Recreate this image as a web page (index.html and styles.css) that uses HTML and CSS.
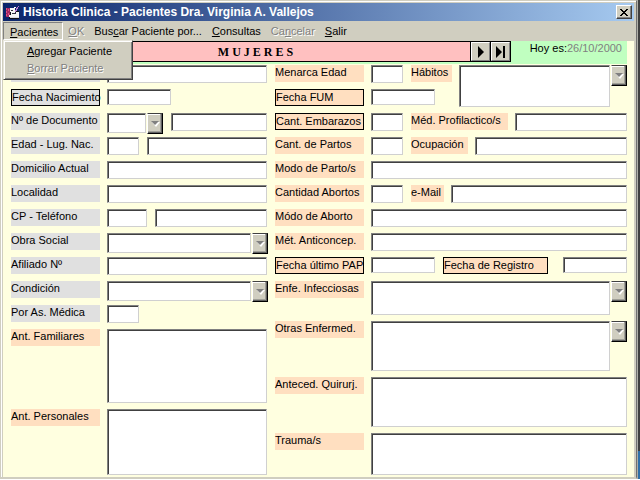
FILE: index.html
```html
<!DOCTYPE html>
<html lang="es">
<head>
<meta charset="utf-8">
<title>Historia Clinica</title>
<link rel="stylesheet" href="styles.css">
</head>
<body>
<div class="screen">
<main class="window">
  <header class="titlebar">
    <svg class="app-icon" viewBox="0 0 16 16" width="16" height="16" shape-rendering="crispEdges" aria-hidden="true">
      <path fill="#a02860" d="M1 4h4v9H1z"/><path fill="#e05080" d="M1 4h1v2H1zM3 5h1v2H3zM1 7h1v2H1zM3 9h1v2H3zM1 10h1v2H1z"/>
      <path fill="#101018" d="M5 7h9v7H5zM4 13h10v2H4z"/>
      <path fill="#f4f4f4" d="M5 4h5v2h1v2h3v5H4v-2h2V8H5z"/><path fill="#d8d8e0" d="M5 13h9v1H5z"/>
      <path fill="#303040" d="M6 6h2v1H6zM7 9h4v1H7zM10 8h1v1h-1z"/>
      <path fill="#c080d0" d="M13 2h1v1h-1v2h-1v2h-1v1h-1V6h1V4h1V3h1z"/><path fill="#fff" d="M9 3h2v1H9z"/>
    </svg>
    <h1>Historia Clinica - Pacientes Dra. Virginia A. Vallejos</h1>
    <button class="close" type="button" aria-label="Cerrar"><svg viewBox="0 0 8 7" width="8" height="7" shape-rendering="crispEdges" aria-hidden="true"><path d="M0 0h2v1h1v1h2V1h1V0h2v1H7v1H6v1H5v1h1v1h1v1h1v1H6V6H5V5H3v1H2v1H0V6h1V5h1V4h1V3H2V2H1V1H0z"/></svg></button>
  </header>

  <nav class="menubar">
    <button class="menu open" type="button"><u>P</u>acientes</button>
    <button class="menu" type="button" disabled><u>O</u>K</button>
    <button class="menu" type="button">Bus<u>c</u>ar Paciente por...</button>
    <button class="menu" type="button"><u>C</u>onsultas</button>
    <button class="menu" type="button" disabled>Ca<u>n</u>celar</button>
    <button class="menu" type="button"><u>S</u>alir</button>
    <div class="dropdown">
      <button type="button"><u>A</u>gregar Paciente</button>
      <button type="button" disabled><u>B</u>orrar Paciente</button>
    </div>
  </nav>

  <div class="client">
    <div class="record">
      <div class="navigator">
        <h2>M U J E R E S</h2>
        <button type="button" aria-label="Siguiente"><svg viewBox="0 0 10 12" width="10" height="12" aria-hidden="true"><path d="M2 0l6 6-6 6z"/></svg></button>
        <button type="button" aria-label="Último"><svg viewBox="0 0 10 12" width="10" height="12" aria-hidden="true"><path d="M0 0l6 6-6 6zM7 0h2v12H7z"/></svg></button>
      </div>
      <p class="today">Hoy es:<span>26/10/2000</span></p>
    </div>

    <form class="form">
      <section class="column">
        <div class="row"><span class="label gray"></span><input class="grow" type="text" aria-label="Paciente"></div>
        <div class="row"><label class="label gray boxed" for="nac">Fecha Nacimiento</label><input class="date" id="nac" type="text"></div>
        <div class="row"><label class="label gray" for="doc">Nº de Documento</label><span class="combo small"><select id="doc"></select><span class="arrow"><svg viewBox="0 0 9 6" width="9" height="6" aria-hidden="true"><path class="light" d="M1 1h8L5 6z"/><path class="dark" d="M0 0h8L4 4z"/></svg></span></span><input class="grow" type="text" aria-label="Número"></div>
        <div class="row"><label class="label gray" for="edad">Edad - Lug. Nac.</label><input class="short" id="edad" type="text"><input class="grow" type="text" aria-label="Lugar"></div>
        <div class="row"><label class="label gray" for="dom">Domicilio Actual</label><input class="grow" id="dom" type="text"></div>
        <div class="row"><label class="label gray" for="loc">Localidad</label><input class="grow" id="loc" type="text"></div>
        <div class="row"><label class="label gray" for="cp">CP - Teléfono</label><input class="code" id="cp" type="text"><input class="grow" type="text" aria-label="Teléfono"></div>
        <div class="row"><label class="label gray" for="obra">Obra Social</label><span class="combo"><select id="obra"></select><span class="arrow"><svg viewBox="0 0 9 6" width="9" height="6" aria-hidden="true"><path class="light" d="M1 1h8L5 6z"/><path class="dark" d="M0 0h8L4 4z"/></svg></span></span></div>
        <div class="row"><label class="label gray" for="afi">Afiliado Nº</label><input class="grow" id="afi" type="text"></div>
        <div class="row"><label class="label gray" for="cond">Condición</label><span class="combo"><select id="cond"></select><span class="arrow"><svg viewBox="0 0 9 6" width="9" height="6" aria-hidden="true"><path class="light" d="M1 1h8L5 6z"/><path class="dark" d="M0 0h8L4 4z"/></svg></span></span></div>
        <div class="row"><label class="label gray" for="as">Por As. Médica</label><input class="short" id="as" type="text"></div>
        <div class="row area"><label class="label" for="fam">Ant. Familiares</label><textarea class="h-large" id="fam"></textarea></div>
        <div class="row area"><label class="label" for="per">Ant. Personales</label><textarea class="h-medium" id="per"></textarea></div>
      </section>

      <section class="column">
        <div class="top">
          <label class="label" for="men">Menarca Edad</label><input class="short" id="men" type="text">
          <label class="label habits-label" for="hab">Hábitos</label>
          <div class="habits"><textarea id="hab"></textarea><button class="arrow" type="button" aria-label="Elegir hábitos"><svg viewBox="0 0 9 6" width="9" height="6" aria-hidden="true"><path class="light" d="M1 1h8L5 6z"/><path class="dark" d="M0 0h8L4 4z"/></svg></button></div>
          <label class="label boxed" for="fum">Fecha FUM</label><input class="date fum" id="fum" type="text">
        </div>
        <div class="row"><label class="label boxed" for="emb">Cant. Embarazos</label><input class="short" id="emb" type="text"><label class="label w-long" for="prof">Méd. Profilactico/s</label><input class="grow" id="prof" type="text"></div>
        <div class="row"><label class="label" for="partos">Cant. de Partos</label><input class="short" id="partos" type="text"><label class="label w-mid" for="ocu">Ocupación</label><input class="grow" id="ocu" type="text"></div>
        <div class="row"><label class="label" for="modo">Modo de Parto/s</label><input class="grow" id="modo" type="text"></div>
        <div class="row"><label class="label" for="abo">Cantidad Abortos</label><input class="short" id="abo" type="text"><label class="label w-mail" for="mail">e-Mail</label><input class="grow" id="mail" type="text"></div>
        <div class="row"><label class="label" for="mabo">Módo de Aborto</label><input class="grow" id="mabo" type="text"></div>
        <div class="row"><label class="label" for="anti">Mét. Anticoncep.</label><input class="grow" id="anti" type="text"></div>
        <div class="row"><label class="label boxed" for="pap">Fecha último PAP</label><input class="date" id="pap" type="text"><label class="label boxed w-reg" for="reg">Fecha de Registro</label><input class="date end" id="reg" type="text"></div>
        <div class="row area"><label class="label" for="inf">Enfe. Infecciosas</label><textarea class="h-small" id="inf"></textarea><button class="arrow" type="button" aria-label="Elegir infecciosas"><svg viewBox="0 0 9 6" width="9" height="6" aria-hidden="true"><path class="light" d="M1 1h8L5 6z"/><path class="dark" d="M0 0h8L4 4z"/></svg></button></div>
        <div class="row area"><label class="label" for="otras">Otras Enfermed.</label><textarea class="h-mid" id="otras"></textarea><button class="arrow" type="button" aria-label="Elegir otras"><svg viewBox="0 0 9 6" width="9" height="6" aria-hidden="true"><path class="light" d="M1 1h8L5 6z"/><path class="dark" d="M0 0h8L4 4z"/></svg></button></div>
        <div class="row area"><label class="label" for="qui">Anteced. Quirurj.</label><textarea class="h-mid" id="qui"></textarea></div>
        <div class="row area"><label class="label" for="tra">Trauma/s</label><textarea class="h-low" id="tra"></textarea></div>
      </section>
    </form>
  </div>
</main>
<div class="behind" aria-hidden="true"></div>
</div>
</body>
</html>
```
FILE: styles.css
```css
* { box-sizing: border-box; }

body {
  margin: 0;
  background: #fff;
  color: #000;
  font: 11px/14px "Liberation Sans", Arial, sans-serif;
}

h1, h2, p { margin: 0; }
button, input, select, textarea { font: inherit; color: inherit; border-radius: 0; margin: 0; }
button { padding: 0; }

.screen { display: flex; }

.window {
  flex: 1;
  min-width: 0;
  border: 1px solid #d0cec0;
  border-right-color: #707070;
  border-bottom: 2px solid #d0cec0;
  box-shadow: inset 1px 1px #fff;
  background: #d0cec0;
  padding: 2px 2px 0;
}

.behind {
  width: 3px;
  border-left: 1px solid #b0b0a8;
  background: linear-gradient(#404040 451px, #3070a8 451px);
}

/* Title bar */
.titlebar {
  display: flex;
  align-items: center;
  height: 18px;
  padding: 0 2px;
  background: linear-gradient(90deg, #0a246a, #a6caf0);
  color: #fff;
}
.titlebar h1 { flex: 1; margin-left: 2px; font-size: 12px; line-height: 18px; white-space: nowrap; }
.close {
  display: flex;
  align-items: center;
  justify-content: center;
  width: 16px;
  height: 14px;
  border: 1px solid;
  border-color: #fff #404040 #404040 #fff;
  box-shadow: inset -1px -1px #808080;
  background: #d0cec0;
}

/* Menu bar */
.menubar { position: relative; display: flex; height: 20px; padding-top: 1px; }
.menu {
  height: 18px;
  padding: 0 4px;
  border: 1px solid transparent;
  background: none;
  white-space: nowrap;
}
.menu.open { padding: 1px 4px 0 6px; border-color: #808080 #fff #fff #808080; }
button:disabled { color: #808080; text-shadow: 1px 1px #fff; }
.dropdown {
  position: absolute;
  z-index: 2;
  left: 0;
  top: 19px;
  display: flex;
  flex-direction: column;
  width: 130px;
  padding: 1px 2px 3px;
  border: 1px solid;
  border-color: #e8e6dc #404040 #404040 #e8e6dc;
  box-shadow: inset 1px 1px #fff, inset -1px -1px #808080;
  background: #d0cec0;
}
.dropdown button { height: 17px; padding: 0 0 0 21px; border: 0; background: none; text-align: left; }

/* Client area */
.client { padding: 0 7px 2px 8px; background: #ffffe0; }
.record { display: flex; justify-content: space-between; height: 23px; margin-bottom: 1px; background: #c0ffc0; }
.navigator {
  display: flex;
  flex: 1;
  height: 21px;
  margin-left: 28px;
  border: 1px solid #000;
  background: #ffc0c0;
}
.navigator h2 { flex: 1; font: bold 12px/20px "Liberation Serif", serif; text-align: center; }
.navigator button {
  display: flex;
  align-items: center;
  justify-content: center;
  width: 19px;
  border: 1px solid;
  border-color: #fff #808080 #808080 #fff;
  box-shadow: -1px 0 #000;
  background: #d0cec0;
}
.navigator button + button { margin-left: 1px; }
.today { width: 116px; padding-right: 5px; text-align: right; }
.today span { color: #808080; }

/* Form */
.form { display: grid; grid-template-columns: 256fr 352fr; gap: 8px; }
.column { min-width: 0; }
.row { display: flex; align-items: flex-start; min-height: 24px; }
.row.area { margin-bottom: 6px; }
.row.area:last-child { margin-bottom: 0; }

.label {
  flex: none;
  width: 89px;
  height: 17px;
  margin-right: 7px;
  background: #ffdfc0;
  line-height: 14px;
  white-space: nowrap;
}
.label.gray { background: #e0e0e0; }
.label.boxed { border: 1px solid #000; }
.label.w-long { width: 97px; }
.label.w-mid { width: 57px; }
.label.w-mail { width: 33px; }
.label.w-reg { width: 105px; }

input, textarea, select {
  min-width: 0;
  height: 18px;
  padding: 0 2px;
  border: 1px solid;
  border-color: #808080 #d0d0d0 #d0d0d0 #808080;
  box-shadow: inset 1px 1px #404040;
  background: #fff;
  outline: 0;
}
.row > input + input, .row > input + .label, .combo + input { margin-left: 8px; }
.grow { flex: 1; width: 0; }
.short { width: 32px; }
.code { width: 40px; }
.date { width: 64px; height: 16px; }
.row > .end.date { margin-left: auto; }

textarea { display: block; flex: 1; width: 0; resize: none; }
.h-large { height: 74px; }
.h-medium { height: 66px; }
.h-mid { height: 50px; }
.h-low { height: 42px; }
.h-small { height: 34px; }

.combo { display: flex; flex: 1; margin-right: -1px; }
.combo.small { flex: none; width: 56px; margin-right: 0; }
.combo select { appearance: none; flex: 1; height: 20px; }
.arrow {
  display: flex;
  flex: none;
  align-items: center;
  justify-content: center;
  width: 16px;
  height: 21px;
  margin-left: 1px;
  border: 1px solid;
  border-color: #404040 #000 #000 #fff;
  box-shadow: inset -1px -1px #606060, inset -2px -2px #a0a098, inset 0 1px #fff;
  background: #d0cec0;
}
.light { fill: #fff; }
.dark { fill: #808080; }

.top { display: grid; grid-template-columns: 96px 40px 24px 24px 1fr; grid-template-rows: 24px 24px; }
.habits-label.label { grid-column: 3 / 5; width: 41px; }
.habits { grid-column: 5; grid-row: 1 / 3; display: flex; }
.habits textarea { height: 42px; }
.fum { grid-column: 2 / 4; }
```
